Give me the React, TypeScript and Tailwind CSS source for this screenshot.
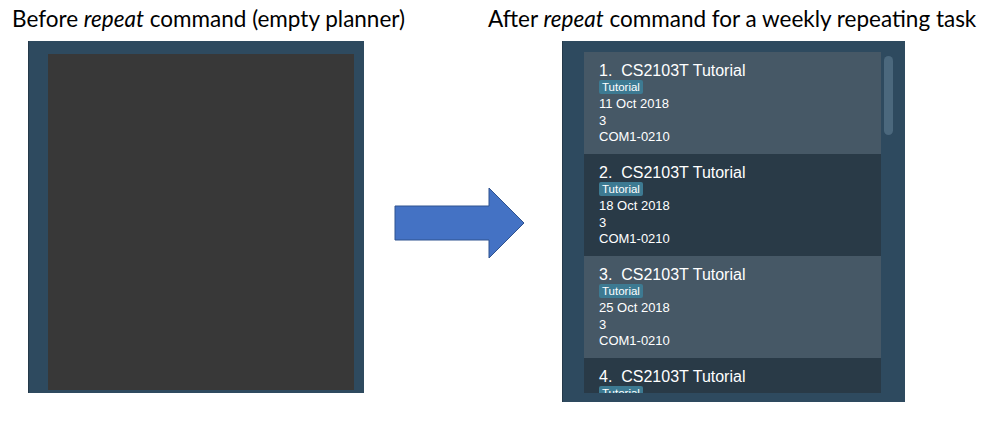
const tasks = [
  { n: 1, date: "11 Oct 2018", shade: "bg-[#465866]" },
  { n: 2, date: "18 Oct 2018", shade: "bg-[#293a47]" },
  { n: 3, date: "25 Oct 2018", shade: "bg-[#465866]" },
  { n: 4, date: "1 Nov 2018", shade: "bg-[#293a47]" },
];

const TaskCard = ({ n, date, shade }: { n: number; date: string; shade: string }) => (
  <div className={`${shade} h-[102px] shrink-0 pl-[15px] pt-[9px] text-white`}>
    <div className="text-[16px] leading-[19px] whitespace-pre">{`${n}.  CS2103T Tutorial`}</div>
    <div className="flex">
      <span className="bg-[#3d7a92] rounded-[2px] px-[3px] text-[11.5px] leading-[14px]">Tutorial</span>
    </div>
    <div className="mt-[2px] text-[13px] leading-[16.5px]">
      <div>{date}</div>
      <div>3</div>
      <div>COM1-0210</div>
    </div>
  </div>
);

const Arrow = () => (
  <svg width="131" height="72" viewBox="0 0 131 72" className="shrink-0">
    <polygon
      points="1,19 95,19 95,1 130,36 95,71 95,53 1,53"
      fill="#4472c4"
      stroke="#2f528f"
      strokeWidth="1"
    />
  </svg>
);

export default function App() {
  return (
    <div className="w-[991px] h-[424px] bg-white flex flex-col font-['Lato',sans-serif]">
      {/* headings */}
      <div className="flex h-[41px] pt-[5px] text-[22.5px] leading-[27px] text-black">
        <div className="pl-[12px] w-[488px]">
          Before <i>repeat</i> command (empty planner)
        </div>
        <div>
          After <i>repeat</i> command for a weekly repeating task
        </div>
      </div>

      <div className="flex items-start font-['Liberation_Sans',sans-serif]">
        {/* empty planner */}
        <div className="ml-[28px] w-[336px] h-[352px] bg-[#2e4a5f] border-l border-[#24394a] pl-[19px] pt-[13px] pr-[10px] pb-[3px]">
          <div className="w-full h-full bg-[#383838]" />
        </div>

        <div className="ml-[30px] mt-[146px]">
          <Arrow />
        </div>

        {/* planner with repeated task */}
        <div className="ml-[37px] w-[343px] h-[361px] bg-[#2e4a5f] border-l border-[#24394a] flex pt-[11px] pl-[21px]">
          <div className="w-[297px] h-[341px] overflow-hidden flex flex-col">
            {tasks.map((t) => (
              <TaskCard key={t.n} {...t} />
            ))}
          </div>
          <div className="ml-[3px] mt-[4px] w-[9px] h-[79px] rounded-full bg-[#4b687d]" />
        </div>
      </div>
    </div>
  );
}
